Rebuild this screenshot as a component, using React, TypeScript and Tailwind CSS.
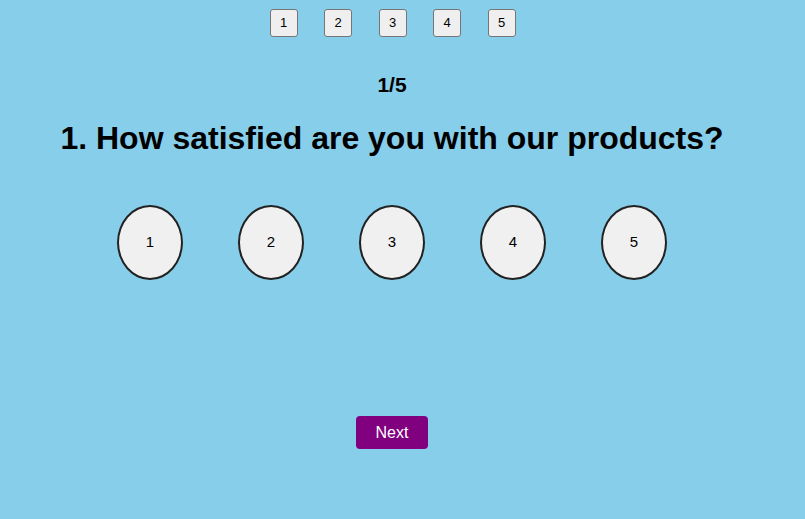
export default function App() {
  const nums = [1, 2, 3, 4, 5];
  return (
    <div className="w-[805px] h-[519px] bg-[#87ceeb] overflow-hidden" style={{ fontFamily: '"Liberation Sans", Arial, sans-serif' }}>
      <div className="w-[784px] flex flex-col items-center">
        <div className="flex gap-[26.5px] mt-[9px] ml-[1px]">
          {nums.map((n) => (
            <button key={n} className="w-[28px] h-[28px] bg-[#efefef] border border-[#767676] rounded-[3px] text-[13px] text-black flex items-center justify-center">
              {n}
            </button>
          ))}
        </div>
        <div className="mt-[36px] text-[21px] font-bold text-black leading-[24px]">1/5</div>
        <h1 className="mt-[23px] text-[32px] font-bold text-black leading-[37px] whitespace-nowrap">
          1. How satisfied are you with our products?
        </h1>
        <div className="flex gap-[55px] mt-[48px]">
          {nums.map((n) => (
            <button key={n} className="w-[66px] h-[75px] rounded-[50%] bg-[#f0f0f0] border-2 border-[#222] text-[15px] text-black flex items-center justify-center">
              {n}
            </button>
          ))}
        </div>
        <button className="mt-[136px] w-[72px] h-[33px] bg-[#800080] text-white text-[16px] rounded-[4px]">
          Next
        </button>
      </div>
    </div>
  );
}
